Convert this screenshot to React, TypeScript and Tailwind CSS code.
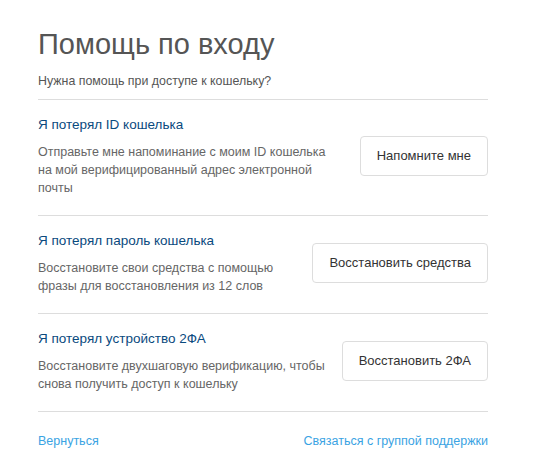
import React from 'react'

type Option = {
    title: string;
    text: string;
    button: string;
}

const options: Option[] = [
    {
        title: 'Я потерял ID кошелька',
        text: 'Отправьте мне напоминание с моим ID кошелька на мой верифицированный адрес электронной почты',
        button: 'Напомните мне',
    },
    {
        title: 'Я потерял пароль кошелька',
        text: 'Восстановите свои средства с помощью фразы для восстановления из 12 слов',
        button: 'Восстановить средства',
    },
    {
        title: 'Я потерял устройство 2ФА',
        text: 'Восстановите двухшаговую верификацию, чтобы снова получить доступ к кошельку',
        button: 'Восстановить 2ФА',
    },
]

export default function App() {
    return (
        <div className="min-h-[473px] bg-white font-['Liberation_Sans',Arial,sans-serif]">
            <div className="w-[450px] ml-[38px] pt-[26px]">
                <h1 className="text-[29px] leading-[36px] text-[#555]">Помощь по входу</h1>
                <p className="mt-[10px] text-[12.4px] leading-[18px] text-[#555]">Нужна помощь при доступе к кошельку?</p>
                <div className="mt-[9px] border-t border-[#ddd]">
                    {options.map((o) => (
                        <div key={o.title} className="flex items-center justify-between gap-[14px] pt-[15px] pb-[18px] border-b border-[#ddd]">
                            <div className="flex-1 max-w-[296px]">
                                <div className="text-[13.5px] leading-[20px] text-[#0a4a7e]">{o.title}</div>
                                <p className="mt-[8px] text-[12.5px] leading-[18px] text-[#666]">{o.text}</p>
                            </div>
                            <button className="shrink-0 whitespace-nowrap h-[40px] px-[16px] rounded-[4px] border border-[#ddd] bg-white text-[13px] text-[#333]">
                                {o.button}
                            </button>
                        </div>
                    ))}
                </div>
                <div className="flex justify-between mt-[20px] text-[12.5px] leading-[18px] text-[#3aa3e3]">
                    <a href="#">Вернуться</a>
                    <a href="#">Связаться с группой поддержки</a>
                </div>
            </div>
        </div>
    )
}
